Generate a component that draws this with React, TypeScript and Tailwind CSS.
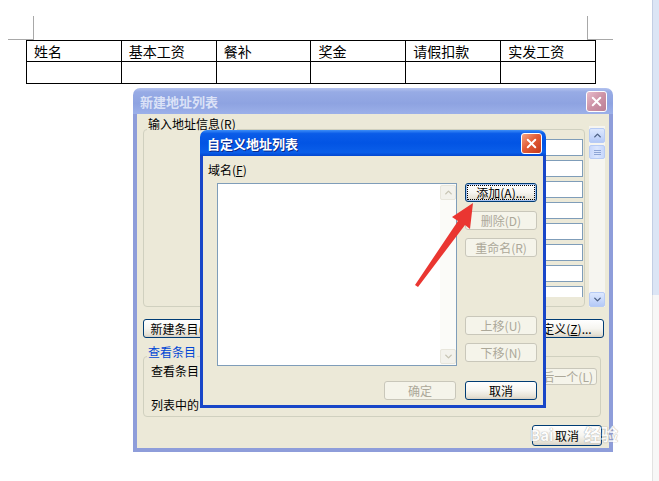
import { ChevronUp, ChevronDown, X } from 'lucide-react'

const btnBase = 'flex items-center justify-center rounded-[3px] border text-[12px] leading-none whitespace-nowrap'
const btnOn =
  'border-[#003c74] bg-[linear-gradient(180deg,#ffffff_0%,#f6f5f0_50%,#e6e2d6_85%,#d6d0c5_100%)] text-black'
const btnOff = 'border-[#c9c7ba] bg-[#f5f4ea] text-[#aca899]'

function Btn({
  label,
  disabled,
  focused,
  className,
}: {
  label: React.ReactNode
  disabled?: boolean
  focused?: boolean
  className?: string
}) {
  if (focused) {
    return (
      <div className={`${btnBase} ${btnOn} p-[1px] shadow-[inset_0_0_0_1px_#a6c2f2] ${className ?? ''}`}>
        <div className="flex h-full w-full items-center justify-center border border-dotted border-black">
          {label}
        </div>
      </div>
    )
  }
  return <div className={`${btnBase} ${disabled ? btnOff : btnOn} ${className ?? ''}`}>{label}</div>
}

function CloseBtn({ active }: { active?: boolean }) {
  return (
    <div
      className={`flex h-[21px] w-[21px] items-center justify-center rounded-[3px] border border-white ${
        active
          ? 'bg-[linear-gradient(135deg,#f4a583_0%,#e35d37_45%,#c4391b_100%)]'
          : 'bg-[linear-gradient(135deg,#e8bccb_0%,#cd93a6_50%,#bb8096_100%)]'
      }`}
    >
      <X className="h-[15px] w-[15px] text-white" strokeWidth={3.2} />
    </div>
  )
}

function ScrollArrow({ up, disabled }: { up?: boolean; disabled?: boolean }) {
  const Icon = up ? ChevronUp : ChevronDown
  return (
    <div
      className={`flex h-[15px] w-[16px] items-center justify-center rounded-[2px] border ${
        disabled
          ? 'border-[#e8e6dc] bg-[#f3f2ec] text-[#c6c3b3]'
          : 'border-[#b7cbf5] bg-[linear-gradient(180deg,#dde8fe_0%,#c5d6fb_60%,#b4c9f6_100%)] text-[#4d6185]'
      }`}
    >
      <Icon className="h-[11px] w-[11px]" strokeWidth={3} />
    </div>
  )
}

const cols = ['姓名', '基本工资', '餐补', '奖金', '请假扣款', '实发工资']

export default function App() {
  return (
    <div className="relative flex h-[481px] w-[659px] overflow-hidden bg-white font-['Noto_Sans_CJK_SC',sans-serif] text-black">
      {/* document page */}
      <div className="w-[652px]">
        <div className="flex justify-between pl-[8px] pr-[39px]">
          <div className="mt-[16px] h-[24px] w-[26px] border-b border-r border-[#a8a8a8]" />
          <div className="mt-[16px] h-[24px] w-[26px] border-b border-l border-[#a8a8a8]" />
        </div>
        <table className="ml-[26px] w-[570px] table-fixed border-collapse text-[14px] leading-none">
          <tbody>
            <tr className="h-[21px]">
              {cols.map((c) => (
                <td key={c} className="border border-black pl-[7px] align-middle">
                  {c}
                </td>
              ))}
            </tr>
            <tr className="h-[22px]">
              {cols.map((c) => (
                <td key={c} className="border border-black" />
              ))}
            </tr>
          </tbody>
        </table>
      </div>

      {/* word window scrollbar strip */}
      <div className="flex w-[7px] flex-col">
        <div className="h-[295px] border-l border-[#c3cee4] bg-[#dce5f5]" />
        <div className="flex-1 border-l border-[#e2e2e2] bg-[#f7f7f7]" />
      </div>

      {/* 新建地址列表 (inactive) */}
      <div className="absolute left-[133px] top-[88px] flex h-[364px] w-[480px] flex-col">
        <div className="flex h-[26px] items-center justify-between rounded-t-[7px] bg-[linear-gradient(180deg,#b4c3ef_0%,#97abe5_15%,#8ea3e1_60%,#9cb0e9_100%)] pl-[7px] pr-[6px]">
          <span className="text-[13px] font-bold leading-none text-[#dbe2f7]">新建地址列表</span>
          <CloseBtn />
        </div>
        <div className="flex flex-1 flex-col border-x-4 border-b-4 border-[#8e9dda] bg-[#ece9d8] pl-[6px] pr-[4px]">
          <div className="mt-[15px] flex gap-[4px]">
            <div className="relative flex h-[178px] w-[442px] flex-col items-end rounded-[4px] border border-[#d0d0bf] pr-[1px] pt-[5px]">
              <span className="absolute -top-[12px] left-[3px] bg-[#ece9d8] px-[1px] text-[12px] leading-none">
                输入地址信息(R)
              </span>
              <div className="flex h-[162px] w-[220px] flex-col gap-[4px] overflow-hidden pt-[4px]">
                {Array.from({ length: 8 }).map((_, i) => (
                  <div key={i} className="h-[17px] shrink-0 border border-[#7f9db9] bg-white" />
                ))}
              </div>
            </div>
            <div className="-mt-[3px] flex h-[181px] w-[16px] flex-col justify-between bg-[#f6f5f0] pt-[2px]">
              <div>
                <ScrollArrow up />
                <div className="mt-[2px] flex h-[14px] w-[16px] flex-col items-center justify-center gap-[1px] rounded-[2px] border border-[#b7cbf5] bg-[linear-gradient(90deg,#c9d8fc_0%,#dbe6fe_50%,#c6d6fb_100%)]">
                  <div className="h-[1px] w-[7px] bg-[#8ea5d6]" />
                  <div className="h-[1px] w-[7px] bg-[#8ea5d6]" />
                  <div className="h-[1px] w-[7px] bg-[#8ea5d6]" />
                </div>
              </div>
              <ScrollArrow />
            </div>
          </div>

          <div className="mt-[12px] flex justify-between pr-[1px]">
            <Btn label="新建条目(N)" className="h-[19px] w-[80px]" />
            <Btn
              label={
                <span>
                  自定义(<u>Z</u>)...
                </span>
              }
              className="h-[19px] w-[86px]"
            />
          </div>

          <div className="relative mt-[18px] flex h-[61px] w-[458px] justify-between rounded-[4px] border border-[#d0d0bf]">
            <span className="absolute -top-[11px] left-[3px] bg-[#ece9d8] px-[1px] text-[12px] leading-none text-[#0046d5]">
              查看条目
            </span>
            <div className="flex flex-col pl-[7px] pt-[8px] text-[12px] leading-none">
              <span>查看条目</span>
              <span className="mt-[22px]">列表中的</span>
            </div>
            <Btn label="最后一个(L)" disabled className="mr-[3px] mt-[11px] h-[17px] w-[110px] !justify-end pr-[3px]" />
          </div>

          <div className="mt-[8px] flex justify-end pr-[3px]">
            <Btn label="取消" className="h-[21px] w-[70px]" />
          </div>
        </div>
      </div>

      {/* 自定义地址列表 (active) */}
      <div className="absolute left-[200px] top-[130px] flex h-[278px] w-[346px] flex-col">
        <div className="flex h-[26px] items-center justify-between rounded-t-[7px] bg-[linear-gradient(180deg,#3d8ef8_0%,#0a5ce8_14%,#0254e4_50%,#0a5ee9_86%,#0347d0_100%)] pl-[7px] pr-[4px]">
          <span className="text-[13px] font-bold leading-none text-white [text-shadow:1px_1px_0_#0a2a8a]">
            自定义地址列表
          </span>
          <CloseBtn active />
        </div>
        <div className="flex flex-1 flex-col border-x-[3px] border-b-[3px] border-[#1846c8] bg-[#ece9d8] pl-[5px] pr-[6px]">
          <span className="mt-[8px] text-[12px] leading-none">
            域名(<u>F</u>)
          </span>
          <div className="mt-[7px] flex">
            <div className="ml-[9px] flex h-[183px] w-[240px] justify-end border border-[#7f9db9] bg-white">
              <div className="flex w-[16px] flex-col justify-between bg-[#fbfbf8] py-[1px]">
                <ScrollArrow up disabled />
                <ScrollArrow disabled />
              </div>
            </div>
            <div className="ml-[8px] flex w-[72px] flex-col">
              <Btn label="添加(A)..." focused className="h-[19px] w-[72px]" />
              <Btn label="删除(D)" disabled className="mt-[9px] h-[19px] w-[72px]" />
              <Btn label="重命名(R)" disabled className="mt-[8px] h-[19px] w-[72px]" />
              <Btn label="上移(U)" disabled className="mt-[59px] h-[19px] w-[72px]" />
              <Btn label="下移(N)" disabled className="mt-[8px] h-[19px] w-[72px]" />
            </div>
          </div>
          <div className="mt-[15px] flex justify-end gap-[9px]">
            <Btn label="确定" disabled className="h-[19px] w-[72px]" />
            <Btn label="取消" className="h-[19px] w-[72px]" />
          </div>
        </div>
      </div>

      {/* red arrow annotation */}
      <svg className="absolute left-[410px] top-[195px]" width="70" height="95" viewBox="0 0 70 95">
        <polygon points="63,8 60,34 55,30 8,92 5,90 48,26 42,22" fill="#ea3631" />
      </svg>

      {/* watermark */}
      <span className="absolute left-[530px] top-[427px] text-[15px] font-bold leading-none text-white opacity-80 [text-shadow:0_0_1px_#9a9a9a,0_0_1px_#9a9a9a]">
        Bai
      </span>
      <span className="absolute left-[584px] top-[425px] text-[17px] font-bold leading-none text-white opacity-80 [text-shadow:0_0_1px_#9a9a9a,0_0_1px_#9a9a9a]">
        经验
      </span>
    </div>
  )
}
